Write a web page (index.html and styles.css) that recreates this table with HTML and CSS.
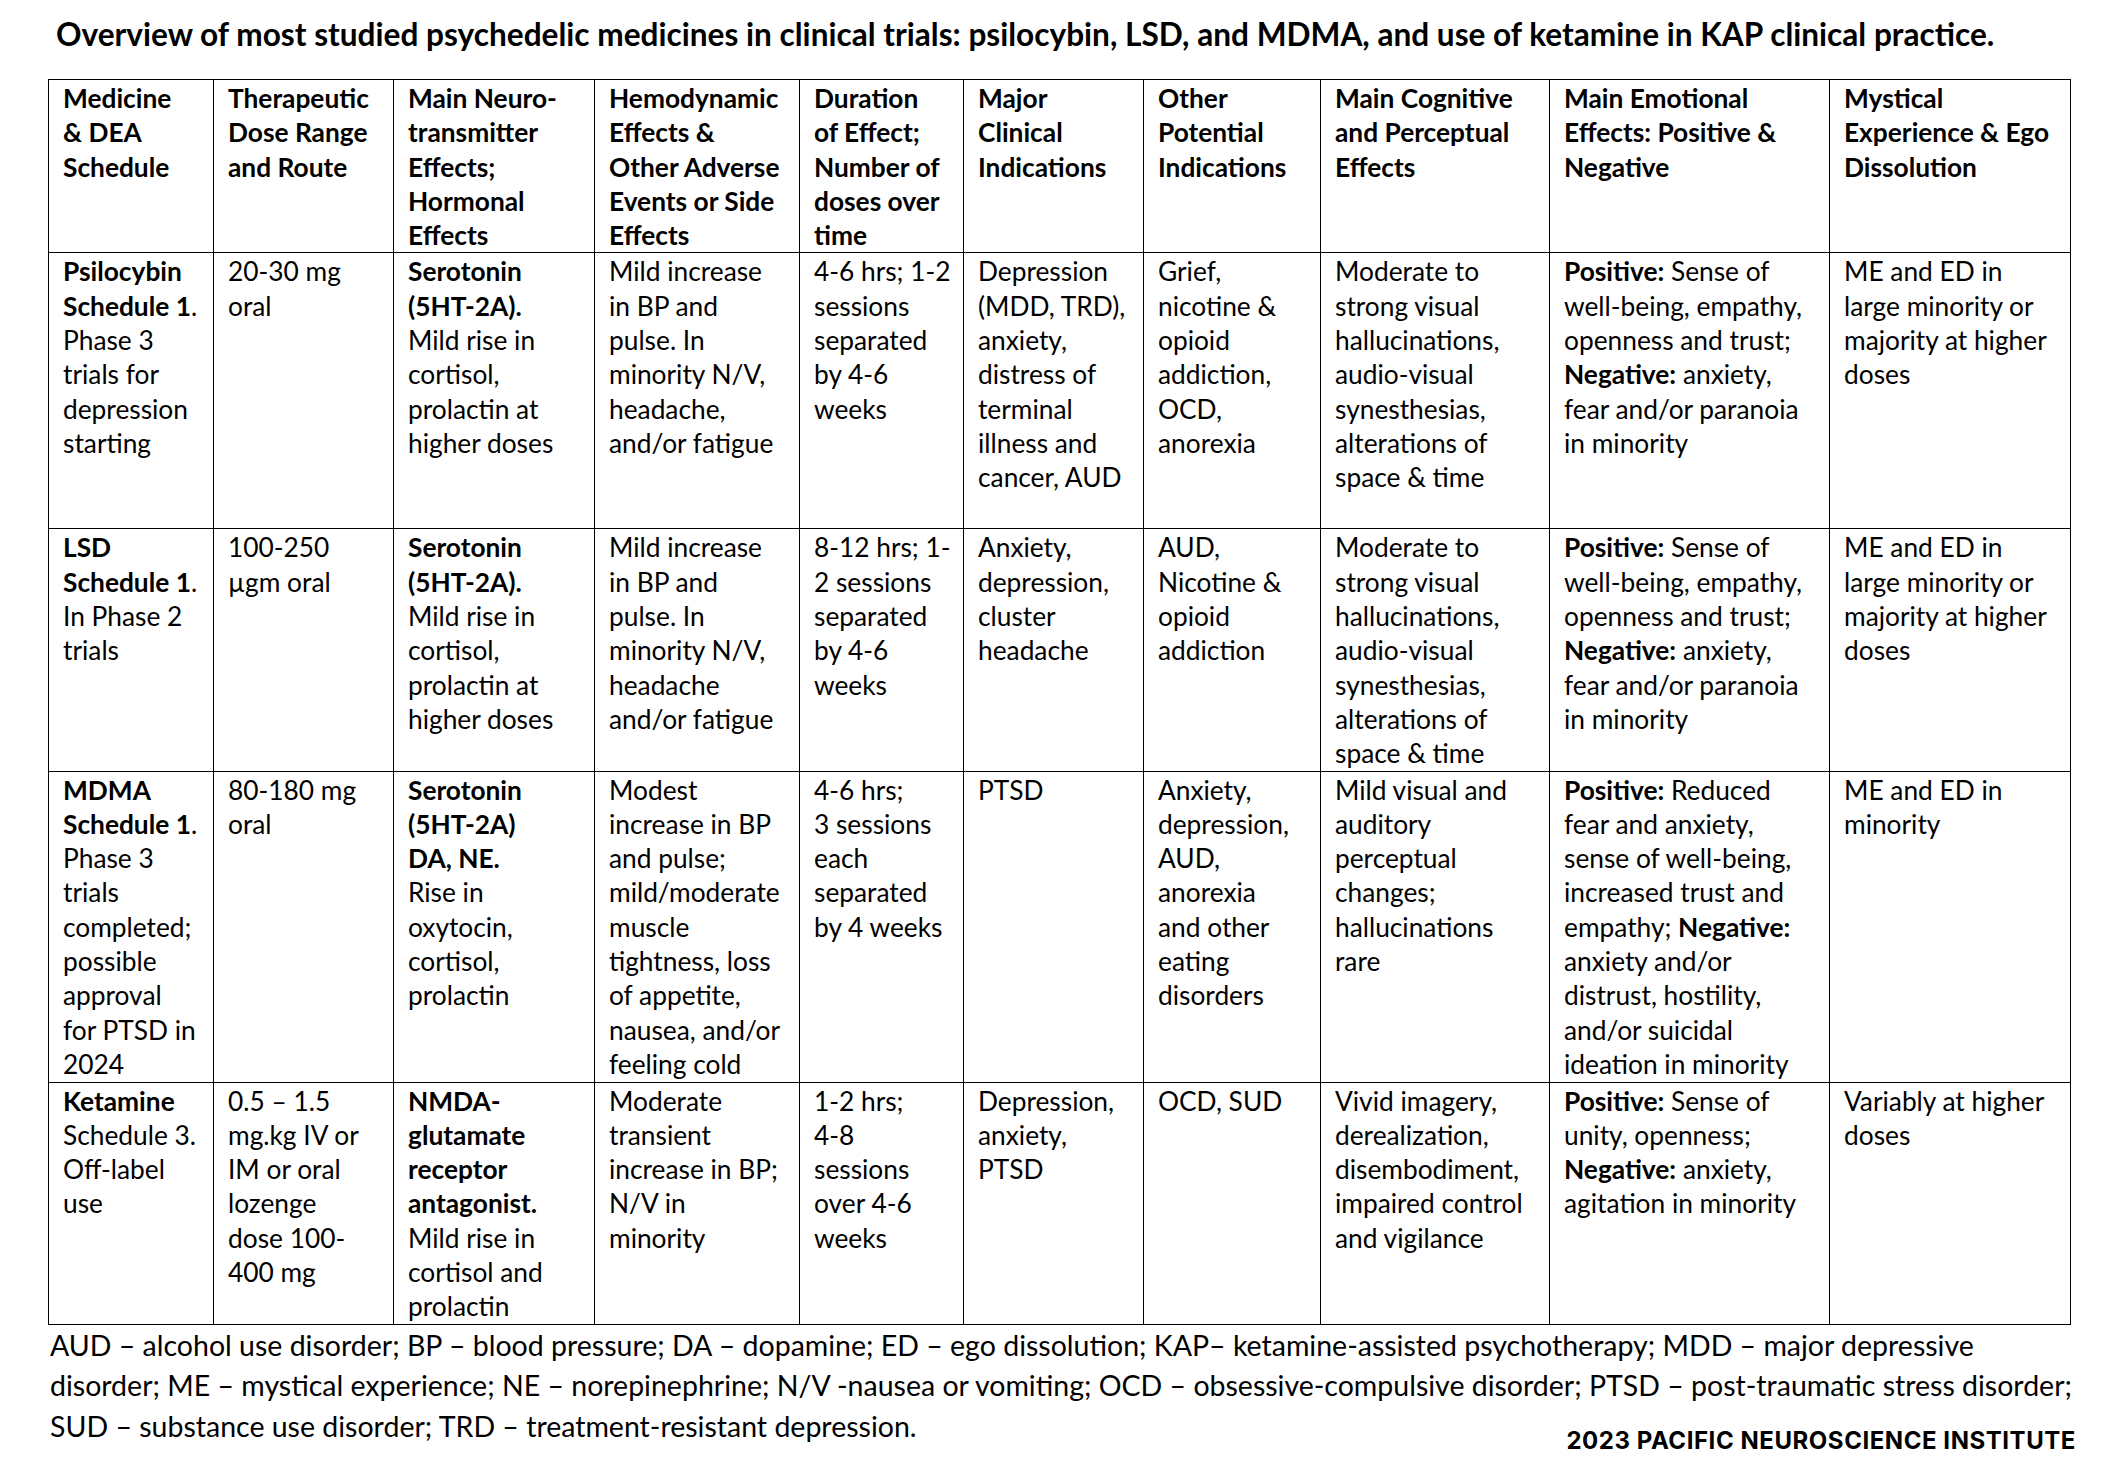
FILE: index.html
```html
<!DOCTYPE html>
<html lang="en">
<head>
<meta charset="utf-8">
<title>Overview of psychedelic medicines</title>
<link rel="stylesheet" href="styles.css">
</head>
<body>
<div class="page">
  <h1 class="title">Overview of most studied psychedelic medicines in clinical trials: psilocybin, LSD, and MDMA, and use of ketamine in KAP clinical practice.</h1>
  <table class="grid">
    <colgroup>
      <col class="c1"><col class="c2"><col class="c3"><col class="c4"><col class="c5">
      <col class="c6"><col class="c7"><col class="c8"><col class="c9"><col class="c10">
    </colgroup>
    <tr class="r-head">
      <th>Medicine<br>&amp; DEA<br>Schedule</th>
      <th>Therapeutic<br>Dose Range<br>and Route</th>
      <th>Main Neuro-<br>transmitter<br>Effects;<br>Hormonal<br>Effects</th>
      <th>Hemodynamic<br>Effects &amp;<br>Other Adverse<br>Events or Side<br>Effects</th>
      <th>Duration<br>of Effect;<br>Number of<br>doses over<br>time</th>
      <th>Major<br>Clinical<br>Indications</th>
      <th>Other<br>Potential<br>Indications</th>
      <th>Main Cognitive<br>and Perceptual<br>Effects</th>
      <th>Main Emotional<br>Effects: Positive &amp;<br>Negative</th>
      <th>Mystical<br>Experience &amp; Ego<br>Dissolution</th>
    </tr>
    <tr class="r-psi">
      <td><b>Psilocybin</b><br><b>Schedule 1</b>.<br>Phase 3<br>trials for<br>depression<br>starting</td>
      <td>20-30 mg<br>oral</td>
      <td><b>Serotonin<br>(5HT-2A).</b><br>Mild rise in<br>cortisol,<br>prolactin at<br>higher doses</td>
      <td>Mild increase<br>in BP and<br>pulse. In<br>minority N/V,<br>headache,<br>and/or fatigue</td>
      <td>4-6 hrs; 1-2<br>sessions<br>separated<br>by 4-6<br>weeks</td>
      <td>Depression<br>(MDD, TRD),<br>anxiety,<br>distress of<br>terminal<br>illness and<br>cancer, AUD</td>
      <td>Grief,<br>nicotine &amp;<br>opioid<br>addiction,<br>OCD,<br>anorexia</td>
      <td>Moderate to<br>strong visual<br>hallucinations,<br>audio-visual<br>synesthesias,<br>alterations of<br>space &amp; time</td>
      <td><b>Positive:</b> Sense of<br>well-being, empathy,<br>openness and trust;<br><b>Negative:</b> anxiety,<br>fear and/or paranoia<br>in minority</td>
      <td>ME and ED in<br>large minority or<br>majority at higher<br>doses</td>
    </tr>
    <tr class="r-lsd">
      <td><b>LSD</b><br><b>Schedule 1</b>.<br>In Phase 2<br>trials</td>
      <td>100-250<br>µgm oral</td>
      <td><b>Serotonin<br>(5HT-2A).</b><br>Mild rise in<br>cortisol,<br>prolactin at<br>higher doses</td>
      <td>Mild increase<br>in BP and<br>pulse. In<br>minority N/V,<br>headache<br>and/or fatigue</td>
      <td>8-12 hrs; 1-<br>2 sessions<br>separated<br>by 4-6<br>weeks</td>
      <td>Anxiety,<br>depression,<br>cluster<br>headache</td>
      <td>AUD,<br>Nicotine &amp;<br>opioid<br>addiction</td>
      <td>Moderate to<br>strong visual<br>hallucinations,<br>audio-visual<br>synesthesias,<br>alterations of<br>space &amp; time</td>
      <td><b>Positive:</b> Sense of<br>well-being, empathy,<br>openness and trust;<br><b>Negative:</b> anxiety,<br>fear and/or paranoia<br>in minority</td>
      <td>ME and ED in<br>large minority or<br>majority at higher<br>doses</td>
    </tr>
    <tr class="r-mdma">
      <td><b>MDMA</b><br><b>Schedule 1</b>.<br>Phase 3<br>trials<br>completed;<br>possible<br>approval<br>for PTSD in<br>2024</td>
      <td>80-180 mg<br>oral</td>
      <td><b>Serotonin<br>(5HT-2A)<br>DA, NE.</b><br>Rise in<br>oxytocin,<br>cortisol,<br>prolactin</td>
      <td>Modest<br>increase in BP<br>and pulse;<br>mild/moderate<br>muscle<br>tightness, loss<br>of appetite,<br>nausea, and/or<br>feeling cold</td>
      <td>4-6 hrs;<br>3 sessions<br>each<br>separated<br>by 4 weeks</td>
      <td>PTSD</td>
      <td>Anxiety,<br>depression,<br>AUD,<br>anorexia<br>and other<br>eating<br>disorders</td>
      <td>Mild visual and<br>auditory<br>perceptual<br>changes;<br>hallucinations<br>rare</td>
      <td><b>Positive:</b> Reduced<br>fear and anxiety,<br>sense of well-being,<br>increased trust and<br>empathy; <b>Negative:</b><br>anxiety and/or<br>distrust, hostility,<br>and/or suicidal<br>ideation in minority</td>
      <td>ME and ED in<br>minority</td>
    </tr>
    <tr class="r-ket">
      <td><b>Ketamine</b><br>Schedule 3.<br>Off-label<br>use</td>
      <td>0.5 – 1.5<br>mg.kg IV or<br>IM or oral<br>lozenge<br>dose 100-<br>400 mg</td>
      <td><b>NMDA-<br>glutamate<br>receptor<br>antagonist.</b><br>Mild rise in<br>cortisol and<br>prolactin</td>
      <td>Moderate<br>transient<br>increase in BP;<br>N/V in<br>minority</td>
      <td>1-2 hrs;<br>4-8<br>sessions<br>over 4-6<br>weeks</td>
      <td>Depression,<br>anxiety,<br>PTSD</td>
      <td>OCD, SUD</td>
      <td>Vivid imagery,<br>derealization,<br>disembodiment,<br>impaired control<br>and vigilance</td>
      <td><b>Positive:</b> Sense of<br>unity, openness;<br><b>Negative:</b> anxiety,<br>agitation in minority</td>
      <td>Variably at higher<br>doses</td>
    </tr>
  </table>
  <p class="notes">AUD – alcohol use disorder; BP – blood pressure; DA – dopamine; ED – ego dissolution; KAP– ketamine-assisted psychotherapy; MDD – major depressive<br>disorder; ME – mystical experience; NE – norepinephrine; N/V -nausea or vomiting; OCD – obsessive-compulsive disorder; PTSD – post-traumatic stress disorder;<br>SUD – substance use disorder; TRD – treatment-resistant depression.</p>
  <div class="credit">2023 PACIFIC NEUROSCIENCE INSTITUTE</div>
</div>
</body>
</html>
```

FILE: styles.css
```css
html, body {
  margin: 0;
  padding: 0;
  background: #ffffff;
}

.page {
  width: 2112px;
  padding: 0 0 0 48px;
  box-sizing: border-box;
  font-family: Lato, "Liberation Sans", sans-serif;
  color: #000;
}

.title {
  margin: 0;
  padding: 15px 0 0 8px;
  height: 79px;
  box-sizing: border-box;
  font-size: 31.6px;
  font-weight: 700;
  line-height: 38px;
  white-space: nowrap;
}

.grid {
  border-collapse: collapse;
  table-layout: fixed;
  width: 2022px;
  font-size: 26.3px;
  line-height: 34.3px;
}

.c1 { width: 165px; }
.c2 { width: 180px; }
.c3 { width: 201px; }
.c4 { width: 205px; }
.c5 { width: 164px; }
.c6 { width: 180px; }
.c7 { width: 177px; }
.c8 { width: 229px; }
.c9 { width: 280px; }
.c10 { width: 241px; }

.grid th,
.grid td {
  border: 1px solid #000;
  vertical-align: top;
  text-align: left;
  padding: 1px 6px 0 14px;
  white-space: nowrap;
  overflow: hidden;
}

.grid th { font-weight: 700; }
.grid b { font-weight: 700; }

.r-head { height: 172px; }
.r-psi { height: 276px; }
.r-lsd { height: 242px; }
.r-mdma { height: 311px; }
.r-ket { height: 242px; }

.notes {
  margin: 0;
  padding: 0 0 0 2px;
  font-size: 28.5px;
  line-height: 40.5px;
  white-space: nowrap;
}

.credit {
  margin-top: -20px;
  width: 2028px;
  text-align: right;
  font-family: Inter, "Liberation Sans", sans-serif;
  font-weight: 700;
  font-size: 24px;
  line-height: 30px;
  letter-spacing: 0.55px;
}
```
